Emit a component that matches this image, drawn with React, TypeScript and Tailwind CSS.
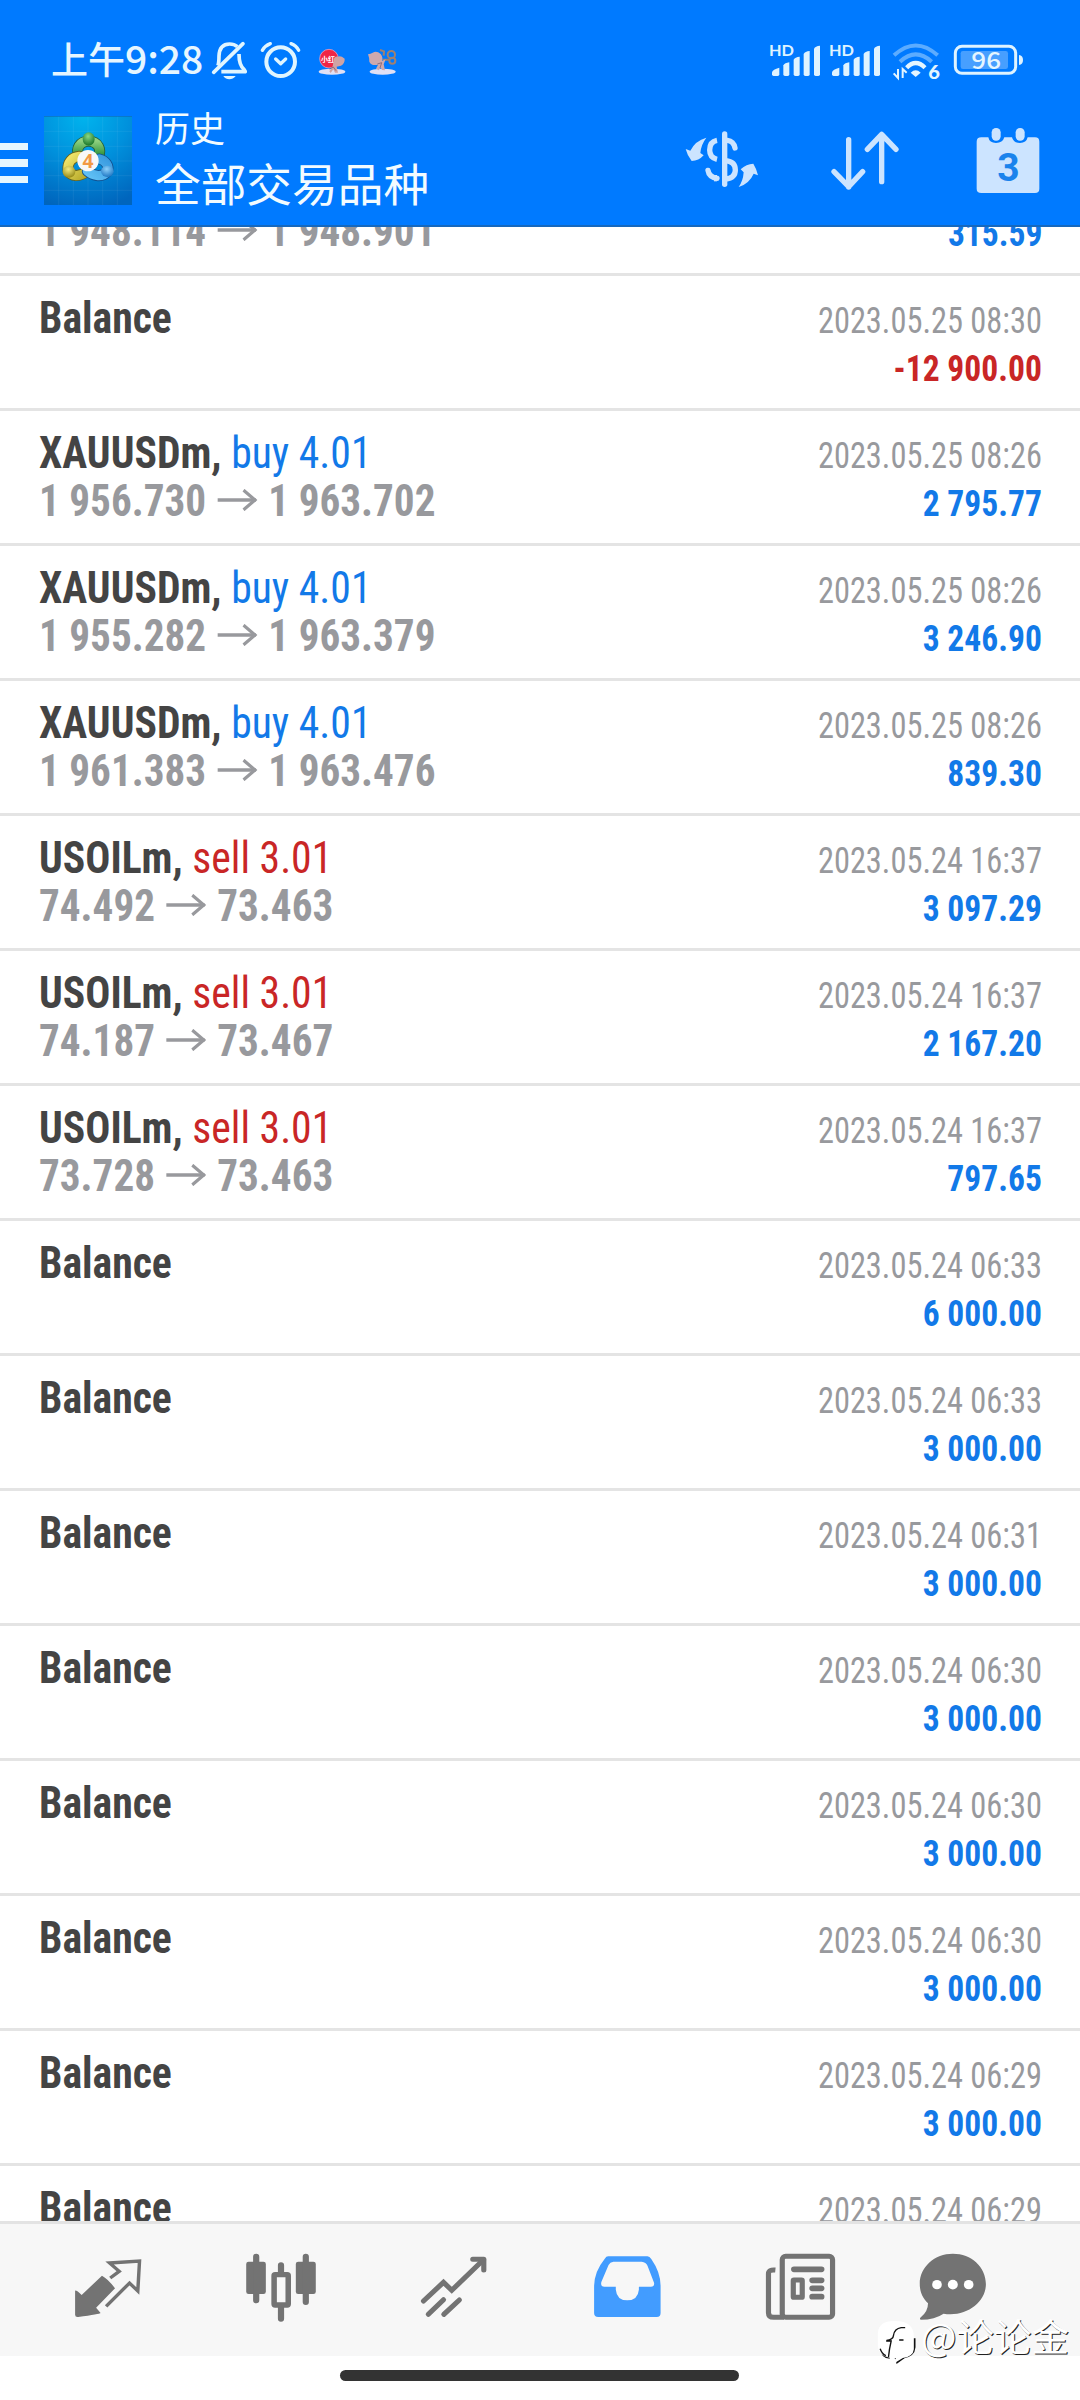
import type { ReactNode } from "react";

type Deal = {
  symbol: string;
  side?: "buy" | "sell";
  volume?: string;
  open?: string;
  close?: string;
  time: string;
  profit: string;
};

const deals: Deal[] = [
  { symbol: "Balance", time: "2023.05.25 08:30", profit: "-12 900.00" },
  { symbol: "XAUUSDm", side: "buy", volume: "4.01", open: "1 956.730", close: "1 963.702", time: "2023.05.25 08:26", profit: "2 795.77" },
  { symbol: "XAUUSDm", side: "buy", volume: "4.01", open: "1 955.282", close: "1 963.379", time: "2023.05.25 08:26", profit: "3 246.90" },
  { symbol: "XAUUSDm", side: "buy", volume: "4.01", open: "1 961.383", close: "1 963.476", time: "2023.05.25 08:26", profit: "839.30" },
  { symbol: "USOILm", side: "sell", volume: "3.01", open: "74.492", close: "73.463", time: "2023.05.24 16:37", profit: "3 097.29" },
  { symbol: "USOILm", side: "sell", volume: "3.01", open: "74.187", close: "73.467", time: "2023.05.24 16:37", profit: "2 167.20" },
  { symbol: "USOILm", side: "sell", volume: "3.01", open: "73.728", close: "73.463", time: "2023.05.24 16:37", profit: "797.65" },
  { symbol: "Balance", time: "2023.05.24 06:33", profit: "6 000.00" },
  { symbol: "Balance", time: "2023.05.24 06:33", profit: "3 000.00" },
  { symbol: "Balance", time: "2023.05.24 06:31", profit: "3 000.00" },
  { symbol: "Balance", time: "2023.05.24 06:30", profit: "3 000.00" },
  { symbol: "Balance", time: "2023.05.24 06:30", profit: "3 000.00" },
  { symbol: "Balance", time: "2023.05.24 06:30", profit: "3 000.00" },
  { symbol: "Balance", time: "2023.05.24 06:29", profit: "3 000.00" },
];

function BellOffIcon() {
  return (
    <svg viewBox="633 60 108 120" className="mt-[40px] ml-[8px] h-[40px] w-[36px]" fill="none" stroke="#e0f5ff" strokeWidth="11">
      <path d="M654 137 C657 128 657 120 657 108 C658 84 670 72 689 72 C699 72 706 75 712 80" />
      <path d="M641 157 L729 71" strokeLinecap="round" />
      <path d="M717 102 C717 125 720 138 732 148 L736 155 H664" strokeLinejoin="round" />
      <path d="M670 168 H707 Q699 178 688 178 Q677 178 670 168Z" fill="#e0f5ff" stroke="none" />
    </svg>
  );
}

function AlarmIcon() {
  return (
    <svg viewBox="780 60 123 117" className="mt-[40px] ml-[13px] h-[39px] w-[41px]" fill="none" stroke="#e0f5ff" strokeLinecap="round">
      <circle cx="842" cy="125" r="43" strokeWidth="12" />
      <path d="M827 117 L842 131 L857 117" strokeWidth="10" strokeLinejoin="round" />
      <path d="M787 91 Q795 77 811 71 M873 71 Q889 77 896 91" strokeWidth="10" />
    </svg>
  );
}

function RedSticker() {
  return (
    <svg viewBox="951 84 90 84" className="mt-[48px] ml-[16px] h-[28px] w-[30px] overflow-visible">
      <ellipse cx="996" cy="155" rx="40" ry="9" fill="#dfe0f5" />
      <circle cx="987" cy="116" r="28" fill="#f02545" stroke="#f9b4cd" strokeWidth="2" />
      <text x="963" y="125" fontSize="21" fontWeight="700" fill="#fff" className="font-['Noto_Sans_CJK_SC']">小红</text>
      <path d="M1001 121 Q1002 108 1014 110 Q1022 106 1034 116 Q1035 130 1023 137 L1010 140 L1014 158 H1005 L1000 148 L992 159 L988 154 L998 139Z" fill="#cfa3a4" />
      <path d="M988 147 L1000 141 L1008 152" stroke="#73505f" strokeWidth="2" fill="none" />
    </svg>
  );
}

function BearSticker() {
  return (
    <svg viewBox="1098 84 96 84" className="mt-[48px] ml-[19px] h-[28px] w-[32px]">
      <ellipse cx="1148" cy="155" rx="39" ry="9" fill="#dfe0f5" />
      <g fill="none" stroke="#a08070" strokeWidth="6">
        <circle cx="1174" cy="104" r="11" />
        <circle cx="1177" cy="122" r="9" />
        <path d="M1140 90 L1152 94 L1151 107 M1148 119 H1168" />
      </g>
      <path d="M1104 103 Q1112 102 1118 98 Q1130 91 1142 102 Q1150 112 1146 123 L1157 118 L1151 133 L1155 151 L1146 150 L1142 143 L1136 151 L1128 146 L1134 134 Q1114 139 1108 125 Q1108 112 1104 103Z" fill="#cfa9ae" />
      <path d="M1132 132 L1145 128 L1140 144" stroke="#73505f" strokeWidth="2" fill="none" />
    </svg>
  );
}

function SignalIcon({ className }: { className: string }) {
  return (
    <svg viewBox="387 69 156 102" className={className} fill="#dff3ff">
      <text x="387" y="107" fontSize="48" fontWeight="700" textLength="75" lengthAdjust="spacingAndGlyphs" className="font-['Lato']">HD</text>
      <path d="M396 163 V157 Q398 148 418 143 V163 Q418 168 413 168 H401 Q396 168 396 163Z" />
      <path d="M430 163 V136 Q434 129 448 127 V163 Q448 168 443 168 H435 Q430 168 430 163Z" />
      <path d="M461 163 V119 Q465 111 479 110 V163 Q479 168 474 168 H466 Q461 168 461 163Z" />
      <path d="M491 163 V102 Q495 94 509 93 V163 Q509 168 504 168 H496 Q491 168 491 163Z" />
      <path d="M522 163 V86 Q526 78 540 77 V163 Q540 168 535 168 H527 Q522 168 522 163Z" />
    </svg>
  );
}

function WifiIcon() {
  return (
    <svg viewBox="756 69 144 111" className="mt-[43px] ml-[11px] h-[37px] w-[48px] overflow-visible" fill="none" strokeWidth="12">
      <path d="M762 106 Q827 47 893 106" stroke="#5cacff" />
      <path d="M780 125 Q827 81 875 125" stroke="#5cacff" />
      <path d="M800 143 Q827 115 855 143" stroke="#e4f5ff" strokeWidth="13" />
      <path d="M812 158 Q827 144 842 158 L827 171Z" fill="#e4f5ff" />
      <path d="M774 147 V174 L761 160 M788 174 V147 L800 158" stroke="#e4f5ff" strokeWidth="6" />
      <text x="865" y="176" fontSize="54" fontWeight="900" fill="#e4f5ff" textLength="35" lengthAdjust="spacingAndGlyphs" className="font-['Lato']">6</text>
    </svg>
  );
}

function BatteryIcon() {
  return (
    <svg viewBox="939 72 213 96" className="mt-[44px] ml-[13px] h-[32px] w-[71px] overflow-visible">
      <rect x="946" y="79" width="181" height="81" rx="20" fill="none" stroke="#dff3ff" strokeWidth="9" />
      <rect x="962" y="93" width="142" height="54" rx="7" fill="#479fff" />
      <path d="M1137 105 Q1149 107 1149 120 Q1149 133 1137 135Z" fill="#dff3ff" />
      <text x="994" y="147" fontSize="72" fontWeight="500" fill="#e4f5ff" textLength="89" lengthAdjust="spacingAndGlyphs" className="font-['Noto_Sans_CJK_SC']">96</text>
    </svg>
  );
}

function AppLogo() {
  return (
    <svg viewBox="12 19 264 267" className="mt-[20px] ml-[16px] h-[89px] w-[88px] shrink-0">
      <defs>
        <radialGradient id="sky" cx="45%" cy="0%" r="105%">
          <stop offset="0" stopColor="#00b4ee" />
          <stop offset="0.5" stopColor="#0090dc" />
          <stop offset="1" stopColor="#0065bd" />
        </radialGradient>
        <linearGradient id="green" x1="0" y1="0" x2="0" y2="1">
          <stop offset="0" stopColor="#8fd07f" />
          <stop offset="1" stopColor="#238a33" />
        </linearGradient>
        <linearGradient id="yellow" x1="0" y1="0" x2="1" y2="1">
          <stop offset="0" stopColor="#f2e76c" />
          <stop offset="1" stopColor="#b8aa2a" />
        </linearGradient>
        <linearGradient id="blue" x1="1" y1="0" x2="0" y2="1">
          <stop offset="0" stopColor="#3a9be0" />
          <stop offset="1" stopColor="#60c0f5" />
        </linearGradient>
        <radialGradient id="knobGreen" cx="45%" cy="30%" r="70%">
          <stop offset="0" stopColor="#8bd885" />
          <stop offset="1" stopColor="#187529" />
        </radialGradient>
        <radialGradient id="knobYellow" cx="45%" cy="30%" r="70%">
          <stop offset="0" stopColor="#f3ea7e" />
          <stop offset="1" stopColor="#968a16" />
        </radialGradient>
        <radialGradient id="knobBlue" cx="45%" cy="30%" r="70%">
          <stop offset="0" stopColor="#8dd0fa" />
          <stop offset="1" stopColor="#1f78c4" />
        </radialGradient>
      </defs>
      <rect x="12" y="19" width="264" height="267" fill="url(#sky)" />
      <path d="M56 19V286M100 19V286M144 19V286M188 19V286M232 19V286M12 65H276M12 110H276M12 154H276M12 198H276M12 242H276" stroke="#fff" strokeOpacity="0.09" strokeWidth="2" />
      <path d="M12 20H276" stroke="#0f64b4" strokeWidth="2" />
      <g fill="none" strokeLinecap="round">
        <path d="M116 140 C107 116 118 96 146 94 C174 96 186 118 175 142" stroke="#245f3a" strokeWidth="33" />
        <path d="M116 140 C107 116 118 96 146 94 C174 96 186 118 175 142" stroke="url(#green)" strokeWidth="28" />
        <path d="M118 140 C96 142 81 158 84 183 C94 202 118 202 140 186" stroke="#67631c" strokeWidth="33" />
        <path d="M118 140 C96 142 81 158 84 183 C94 202 118 202 140 186" stroke="url(#yellow)" strokeWidth="28" />
        <path d="M178 148 C196 152 209 168 202 186 C184 207 156 196 142 184" stroke="#12508f" strokeWidth="33" />
        <path d="M178 148 C196 152 209 168 202 186 C184 207 156 196 142 184" stroke="url(#blue)" strokeWidth="28" />
      </g>
      <ellipse cx="146" cy="88" rx="18" ry="20" fill="url(#knobGreen)" />
      <ellipse cx="87" cy="186" rx="19" ry="18" fill="url(#knobYellow)" />
      <ellipse cx="202" cy="185" rx="19" ry="17" fill="url(#knobBlue)" />
      <circle cx="144" cy="153" r="32" fill="#f8f8f8" />
      <text x="144" y="174" textAnchor="middle" fontSize="58" fontWeight="700" fill="#f29a45" className="font-['Open_Sans']">4</text>
    </svg>
  );
}

function SymbolIcon() {
  return (
    <svg viewBox="135 330 225 174" className="mt-[34px] h-[58px] w-[75px]" fill="none" stroke="#cce4ff" strokeWidth="16">
      <path d="M254 342 V493" strokeLinecap="round" />
      <path d="M231 361 Q209 365 209 390 Q209 413 231 418" />
      <path d="M204 451 Q207 471 231 475" strokeLinecap="round" />
      <path d="M222 465 H231 V484 H222Z" fill="#cce4ff" stroke="none" />
      <path d="M262 361 Q281 363 285 384" strokeLinecap="round" />
      <path d="M257 422 Q286 425 286 450 Q286 474 257 477" />
      <path d="M199 353 Q183 374 181 399 L191 406 Q176 423 155 423 Q142 407 137 387 L151 392 Q166 362 199 353Z" fill="#cce4ff" stroke="none" />
      <path d="M296 501 Q309 484 311 457 L302 448 Q319 432 340 431 Q350 447 354 466 L341 461 Q328 491 296 501Z" fill="#cce4ff" stroke="none" />
    </svg>
  );
}

function SortIcon() {
  return (
    <svg viewBox="570 330 210 183" className="mt-[34px] ml-[70px] h-[61px] w-[70px]" fill="none" stroke="#cce4ff" strokeWidth="16" strokeLinecap="round" strokeLinejoin="round">
      <path d="M626 359 V501 M582 455 L626 500 L668 455" />
      <path d="M725 485 V345 M682 388 L725 343 L768 388" />
    </svg>
  );
}

function CalendarIcon() {
  return (
    <svg viewBox="1005 320 198 201" className="mt-[31px] ml-[75px] h-[67px] w-[66px]">
      <path d="M1024 351 H1045 Q1048 368 1068 368 Q1088 368 1093 351 H1116 Q1120 368 1140 368 Q1159 368 1163 351 H1185 Q1198 351 1198 364 V505 Q1198 518 1185 518 H1024 Q1010 518 1010 505 V364 Q1010 351 1024 351Z" fill="#cce4ff" />
      <rect x="1055" y="323" width="27" height="38" rx="13" fill="#cce4ff" />
      <rect x="1127" y="323" width="27" height="38" rx="13" fill="#cce4ff" />
      <text x="1105" y="481" textAnchor="middle" fontSize="117" fontWeight="700" fill="#1a83ec" className="font-['Roboto']">3</text>
    </svg>
  );
}

function Prices({ open, close }: { open: string; close: string }) {
  return (
    <div className="flex h-[48px] origin-left scale-x-[0.915] items-center gap-[12px] font-bold text-[#98999d]">
      <span>{open}</span>
      <svg viewBox="0 0 44 22" className="-mt-[3px] h-[22px] w-[44px]" fill="none" stroke="#98999d" strokeWidth="3.4">
        <path d="M0 11 H42" />
        <path d="M28.5 1.2 L41 11 L28.5 20.8" />
      </svg>
      <span>{close}</span>
    </div>
  );
}

function Profit({ value }: { value: string }) {
  return (
    <div className={`h-[48px] origin-right scale-x-[0.932] text-right font-bold ${value.startsWith("-") ? "text-[#c92626]" : "text-[#1279e8]"}`}>
      {value}
    </div>
  );
}

function DealRow({ deal }: { deal: Deal }) {
  return (
    <li className="flex h-[135px] shrink-0 justify-between border-t-3 border-[#e4e4e4] pt-[18px] pr-[38px] pl-[39px]">
      <div className="text-[45px]">
        <div className="h-[48px] origin-left scale-x-[0.926] font-bold text-[#444]">
          {deal.symbol}
          {deal.side && ", "}
          {deal.side && (
            <span className={deal.side === "buy" ? "font-normal text-[#1279e8]" : "font-normal text-[#c92626]"}>
              {deal.side} {deal.volume}
            </span>
          )}
        </div>
        {deal.open && deal.close && <Prices open={deal.open} close={deal.close} />}
      </div>
      <div className="pt-[3px] text-[36px]">
        <div className="h-[48px] origin-right scale-x-[0.9] text-right text-[#98999d]">{deal.time}</div>
        <Profit value={deal.profit} />
      </div>
    </li>
  );
}

function TabIcon({ viewBox, label, className, children }: { viewBox: string; label: string; className?: string; children: ReactNode }) {
  return (
    <button aria-label={label} className={className}>
      <svg viewBox={viewBox} preserveAspectRatio="none" className="h-[72px] w-[72px]" fill="none" stroke="#737373">
        {children}
      </svg>
    </button>
  );
}

function TabBar() {
  return (
    <nav className="flex h-[135px] shrink-0 items-start gap-[101px] border-t-3 border-[#e3e3e3] bg-[#f7f7f7] pt-[29px] pl-[72px]">
      <TabIcon viewBox="210 160 209 216" label="Quotes">
        <path d="M219 273 Q222 270 238 286 L297 228 Q314 237 335 266 L280 324 L293 340 Q291 343 228 352 Q219 353 219 345Z" fill="#737373" stroke="none" />
        <path d="M321 235 L347 215 L319 190 L406 184 L401 274 L377 250 L309 320" strokeWidth="10" />
      </TabIcon>
      <TabIcon viewBox="711.5 160 209 216" label="Charts">
        <g fill="#737373" stroke="none">
          <rect x="715" y="186" width="57" height="97" rx="7" />
          <rect x="859" y="186" width="58" height="97" rx="7" />
        </g>
        <path d="M744 171 V302 M888 171 V307 M816 197 V220 M816 320 V357" strokeWidth="18" strokeLinecap="round" />
        <rect x="796" y="225" width="41" height="91" rx="3" strokeWidth="16" />
      </TabIcon>
      <TabIcon viewBox="1215 160 209 216" label="Trade">
        <g strokeWidth="15" strokeLinecap="round">
          <path d="M1231 304 L1289 248 L1313 272 L1405 180" strokeLinejoin="miter" />
          <path d="M1374 179 H1406 V211" strokeLinejoin="round" />
          <path d="M1245 344 L1289 300 M1290 344 L1335 301" />
        </g>
      </TabIcon>
      <TabIcon viewBox="148 160 209 216" label="History">
        <path
          d="M198 170 H312 Q318 170 323 178 Q350 218 350 258 V340 Q350 352 339 352 H169 Q157 352 157 340 V258 Q158 215 188 177 Q192 170 198 170Z M213 186 Q203 187 199 196 L178 247 Q175 261 187 261 H220 V270 Q223 302 253 302 Q284 302 287 270 V261 H322 Q333 261 331 249 L312 198 Q308 187 295 186Z"
          fill="#429cff"
          fillRule="evenodd"
          stroke="none"
        />
      </TabIcon>
      <TabIcon viewBox="652 160 209 216" label="News">
        <rect x="705" y="170" width="146" height="183" rx="10" strokeWidth="15" />
        <path d="M685 211 Q665 209 665 222 V339 Q665 353 680 353 H710" strokeWidth="15" />
        <path d="M739 209 H819 M792 242 H819 M792 266 H819 M792 291 H819" strokeWidth="17" strokeLinecap="round" />
        <rect x="737" y="241" width="26" height="52" rx="2" strokeWidth="15" />
      </TabIcon>
      <TabIcon viewBox="1095 160 209 216" label="Messages" className="-ml-[20px]">
        <path d="M1199 162 C1253 162 1295 202 1295 253 C1295 309 1237 353 1172 342 Q1147 360 1106 360 Q1101 358 1106 353 Q1127 336 1127 311 C1111 295 1103 277 1103 252 C1103 202 1146 162 1199 162Z" fill="#737373" stroke="none" />
        <g fill="#fff" stroke="none">
          <circle cx="1153" cy="255" r="14" />
          <circle cx="1199" cy="255" r="14.5" />
          <circle cx="1245" cy="255" r="14" />
        </g>
      </TabIcon>
    </nav>
  );
}

function Watermark() {
  return (
    <div className="absolute top-[2310px] right-[11px] flex items-start">
      <svg viewBox="45 30 125 135" className="mt-[10px] h-[45px] w-[42px]">
        <path d="M100 146 H125 Q161 141 163 112 V85 H150Z M56 110 Q58 145 86 146 L84 138Z M104 148 L106 162 L130 145Z" fill="#111" />
        <path d="M50 72 Q50 33 100 33 Q158 32 158 80 V118 Q156 140 125 144 L104 157 V144 Q88 144 80 142 Q52 134 50 108Z" fill="#fff" />
        <path d="M132 53 H120 Q100 56 97 76 Q96 89 76 91 M75 93 H90 Q84 118 82 141 M114 90 H127 M57 116 Q62 131 74 137" stroke="#111" strokeWidth="4" fill="none" />
      </svg>
      <span className="ml-[3px] font-['Noto_Sans_CJK_SC'] text-[37.5px] leading-[50px] text-white [text-shadow:1px_1px_0_#222]">@论论金</span>
    </div>
  );
}

export default function App() {
  return (
    <div className="relative flex h-[2400px] w-[1080px] flex-col overflow-hidden bg-white font-['Roboto_Condensed',sans-serif]">
      <header className="h-[227px] shrink-0 border-b-2 border-[#1668bd] bg-[#007aff] text-[#e6f6ff]">
        <div className="flex h-[96px] items-start pl-[51px]">
          <div className="mt-[37px] flex w-[152px] items-baseline font-['Noto_Sans_CJK_SC',sans-serif] leading-[40px] font-medium whitespace-nowrap">
            <span className="text-[37px]">上午</span>
            <span className="text-[39px]">9:28</span>
          </div>
          <BellOffIcon />
          <AlarmIcon />
          <RedSticker />
          <BearSticker />
          <div className="ml-auto flex items-start pr-[56px]">
            <SignalIcon className="mt-[43px] h-[34px] w-[52px] overflow-visible" />
            <SignalIcon className="mt-[43px] ml-[8px] h-[34px] w-[52px] overflow-visible" />
            <WifiIcon />
            <BatteryIcon />
          </div>
        </div>
        <div className="flex items-start">
          <div className="mt-[47px] flex w-[28px] flex-col gap-[9px]">
            <span className="h-[7px] bg-[#e6f6ff]" />
            <span className="h-[8px] bg-[#e6f6ff]" />
            <span className="h-[7px] bg-[#e6f6ff]" />
          </div>
          <AppLogo />
          <div className="mt-[11px] ml-[23px] font-['Noto_Sans_CJK_SC',sans-serif] whitespace-nowrap text-[#f2fbff]">
            <div className="text-[35px] leading-[40px]">历史</div>
            <h1 className="mt-[7px] text-[45.7px] leading-[57px]">全部交易品种</h1>
          </div>
          <div className="ml-auto flex items-start pr-[39px]">
            <SymbolIcon />
            <SortIcon />
            <CalendarIcon />
          </div>
        </div>
      </header>

      <ul className="flex h-[1994px] shrink-0 flex-col overflow-hidden leading-[48px] whitespace-nowrap">
        {/* tail of the deal scrolled under the header */}
        <li className="flex h-[46px] shrink-0 items-start justify-between pr-[38px] pl-[39px]">
          <div className="-mt-[20px] text-[45px]">
            <Prices open="1 948.114" close="1 948.901" />
          </div>
          <div className="-mt-[17px] text-[36px]">
            <Profit value="315.59" />
          </div>
        </li>
        {deals.map((deal, i) => (
          <DealRow key={i} deal={deal} />
        ))}
        <DealRow deal={{ symbol: "Balance", time: "2023.05.24 06:29", profit: "" }} />
      </ul>

      <TabBar />

      <div className="mt-[14px] ml-[340px] h-[11px] w-[399px] shrink-0 rounded-full bg-[#333]" />
      <Watermark />
    </div>
  );
}
